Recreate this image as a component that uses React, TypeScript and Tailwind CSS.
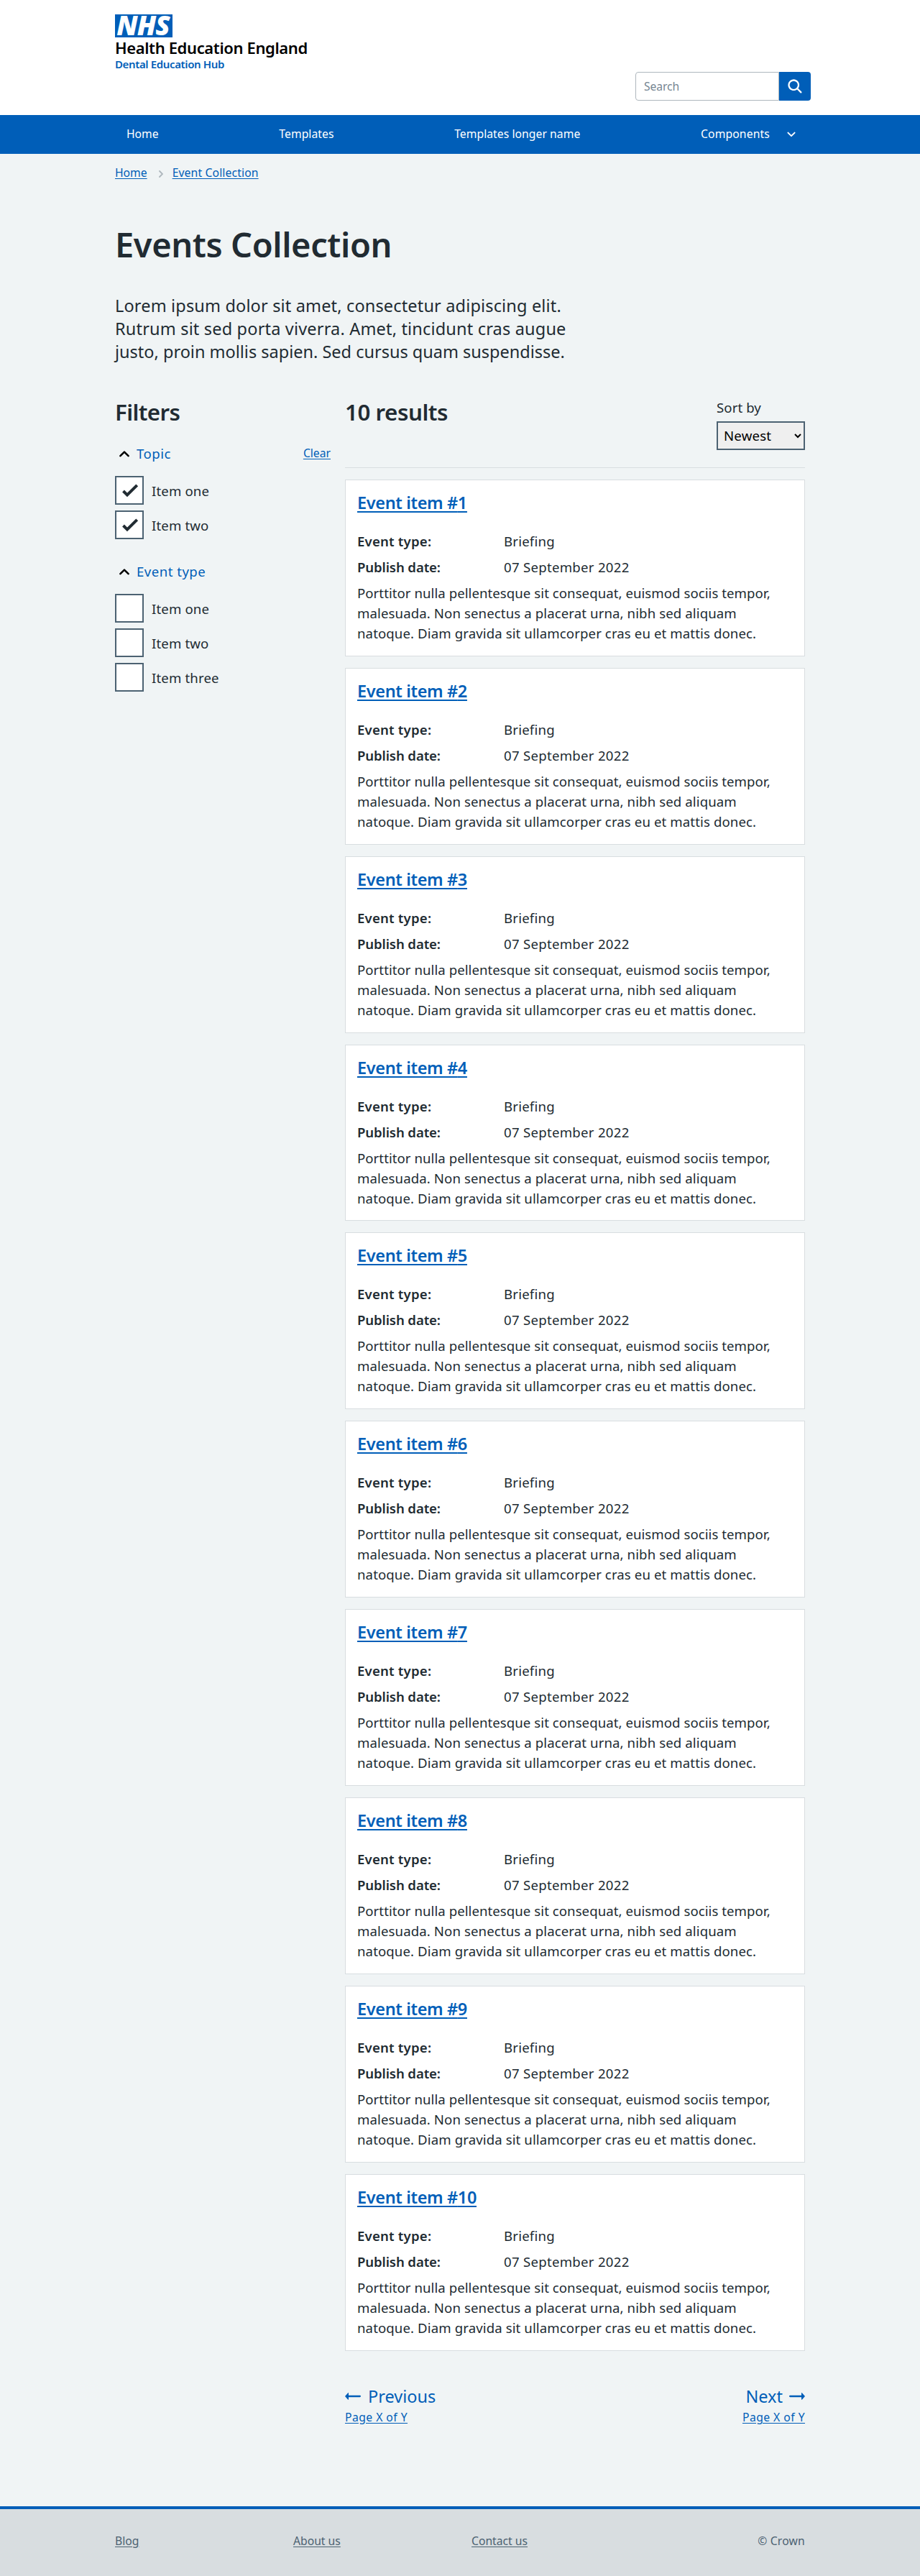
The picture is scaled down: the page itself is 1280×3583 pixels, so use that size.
const link = "text-[#005eb8] underline underline-offset-[2px] decoration-1";

function ChevronUp() {
  return (
    <svg className="ml-[6px] h-[10px] w-[14px]" viewBox="0 0 14 10" fill="none">
      <path d="M1.4 8.2 7 2.6l5.6 5.6" stroke="#000" strokeWidth="2.5" strokeLinecap="round" strokeLinejoin="round" />
    </svg>
  );
}

function Arrow({ flip = false }: { flip?: boolean }) {
  return (
    <svg className={flip ? "h-[10px] w-[22px] rotate-180" : "h-[10px] w-[22px]"} viewBox="0 0 22 10">
      <path d="M0 5 4 .4Q5-.4 5 .9V3.8H20.8Q22 3.9 22 5T20.8 6.2H5V9.1Q5 10.4 4 9.6Z" fill="#005eb8" />
    </svg>
  );
}

function Header() {
  return (
    <header className="bg-white">
      <div className="mx-auto flex h-[160px] w-[960px] justify-between pt-5">
        <div>
          <div className="flex h-8 w-20 items-center justify-center bg-[#005eb8]">
            <span className="pr-[2px] pb-[2px] text-[37.2px] leading-8 font-black italic tracking-[-1px] text-white">
              NHS
            </span>
          </div>
          <div className="mt-[2px] text-[22px] leading-[25px] font-semibold tracking-[-0.37px] text-black">
            Health Education England
          </div>
          <div className="text-[15px] leading-5 font-semibold tracking-[-0.37px] text-[#005eb8]">
            Dental Education Hub
          </div>
        </div>
        <form className="-mr-2 mt-20 flex h-10">
          <input
            placeholder="Search"
            className="h-10 w-[200px] rounded-l-[4px] border border-[#aeb7bd] bg-white px-[11px] text-[15.7px] tracking-[-0.1px] placeholder:text-[#768692]"
          />
          <button type="button" className="flex w-11 items-center justify-center rounded-r-[4px] bg-[#005eb8]">
            <svg className="h-[27px] w-[27px]" viewBox="0 0 24 24" fill="#fff">
              <path d="M19.71 18.29l-4.11-4.1a7 7 0 1 0-1.41 1.41l4.1 4.11a1 1 0 0 0 1.42 0 1 1 0 0 0 0-1.42zM5 10a5 5 0 1 1 5 5 5 5 0 0 1-5-5z" />
            </svg>
          </button>
        </form>
      </div>
      <nav className="bg-[#005eb8]">
        <div className="mx-auto flex h-[54px] w-[960px] items-center justify-between px-4 text-[15.7px] text-white">
          <a>Home</a>
          <a className="tracking-[0.06px]">Templates</a>
          <a className="tracking-[0.05px]">Templates longer name</a>
          <a className="flex items-center tracking-[0.14px]">
            Components
            <svg className="mr-[-3px] ml-[24px] h-[8px] w-[12px]" viewBox="0 0 12 8" fill="none">
              <path d="M1.4 1.6 6 6.2l4.6-4.6" stroke="#fff" strokeWidth="1.9" strokeLinecap="round" strokeLinejoin="round" />
            </svg>
          </a>
        </div>
      </nav>
    </header>
  );
}

function FilterGroup({ title, items, checked }: { title: string; items: string[]; checked: boolean }) {
  return (
    <section>
      <div className="flex items-center justify-between">
        <h3 className="flex items-center gap-[10px] text-[18.6px] leading-7 tracking-[0.48px] text-[#005eb8]">
          <ChevronUp />
          {title}
        </h3>
        {checked && <a className={`mb-[2px] text-[15.7px] leading-6 ${link}`}>Clear</a>}
      </div>
      <div className="mt-[17px] flex flex-col gap-2">
        {items.map((item) => (
          <label key={item} className="flex h-10 items-center">
            <span className="h-10 w-10 border-2 border-[#4c6272] bg-white">
              {checked && (
                <svg className="h-9 w-9" viewBox="2 2 36 36" fill="none">
                  <path d="M11.5 21l5.5 5.5L30.7 12.8" stroke="#212b32" strokeWidth="4" />
                </svg>
              )}
            </span>
            <span className="ml-[11px] pt-px text-[18.6px] leading-7 tracking-[0.15px]">{item}</span>
          </label>
        ))}
      </div>
    </section>
  );
}

function EventCard({ n }: { n: number }) {
  return (
    <article className="h-[245.88px] border border-[#d8dde0] bg-white px-4 pt-[15px]">
      <h3 className="text-[23.5px] leading-8 font-semibold tracking-[-0.36px]">
        <a className="text-[#005eb8] underline decoration-2 underline-offset-[3px]">Event item #{n}</a>
      </h3>
      <dl className="mt-6 grid grid-cols-[204px_1fr] gap-y-2 text-[18.6px] leading-7">
        <dt className="font-semibold tracking-[0.2px]">Event type:</dt>
        <dd className="tracking-[0.2px]">Briefing</dd>
        <dt className="font-semibold tracking-[-0.12px]">Publish date:</dt>
        <dd className="tracking-[0.28px]">07 September 2022</dd>
      </dl>
      <p className="mt-2 text-[18.6px] leading-7 tracking-[0.11px]">
        <span className="tracking-[0.06px]">Porttitor nulla pellentesque sit consequat, euismod sociis tempor,</span>
        <br />
        malesuada. Non senectus a placerat urna, nibh sed aliquam
        <br />
        natoque. Diam gravida sit ullamcorper cras eu et mattis donec.
      </p>
    </article>
  );
}

export default function App() {
  const events = [1, 2, 3, 4, 5, 6, 7, 8, 9, 10];
  return (
    <div className="flex h-[3583px] flex-col bg-[#f0f4f5] font-['Noto_Sans',sans-serif] text-[#212b32]">
      <Header />
      <div className="mx-auto w-[960px] flex-1">
        <div className="mt-[14px] flex items-center text-[15.7px] leading-6">
          <a className={link}>Home</a>
          <svg className="mt-[3px] mr-[13px] ml-[16px] h-[10px] w-[6px]" viewBox="0 0 6 10" fill="none">
            <path d="M1 1l4 4-4 4" stroke="#aeb7bd" strokeWidth="1.8" strokeLinecap="round" />
          </svg>
          <a className={`tracking-[0.14px] ${link}`}>Event Collection</a>
        </div>
        <h1 className="mt-[60px] text-[47px] leading-[56px] font-semibold tracking-[-0.4px]">Events Collection</h1>
        <p className="mt-[41px] text-[23.5px] leading-8">
          <span className="tracking-[0.16px]">Lorem ipsum dolor sit amet, consectetur adipiscing elit.</span>
          <br />
          <span className="tracking-[0.18px]">Rutrum sit sed porta viverra. Amet, tincidunt cras augue</span>
          <br />
          justo, proin mollis sapien. Sed cursus quam suspendisse.
        </p>
        <div className="mt-12 grid grid-cols-[300px_640px] gap-x-5">
          <aside>
            <h2 className="text-[31.3px] leading-10 font-semibold tracking-[-0.6px]">Filters</h2>
            <div className="mt-6 flex flex-col gap-[31px]">
              <FilterGroup title="Topic" items={["Item one", "Item two"]} checked />
              <FilterGroup title="Event type" items={["Item one", "Item two", "Item three"]} checked={false} />
            </div>
          </aside>
          <main>
            <div className="flex h-[98px] justify-between border-b border-[#d8dde0]">
              <h2 className="text-[31.3px] leading-10 font-semibold tracking-[-0.46px]">10 results</h2>
              <label className="block w-[123px] text-[18.6px] leading-7 tracking-[0.1px]">
                Sort by
                <select className="mt-[5px] block h-10 w-[123px] rounded-none border-2 border-[#4c6272] bg-[#efefef] px-1 pb-[2px] tracking-[0.2px] text-black">
                  <option>Newest</option>
                </select>
              </label>
            </div>
            <div className="mt-[15.9px] flex flex-col gap-4">
              {events.map((n) => (
                <EventCard key={n} n={n} />
              ))}
            </div>
            <nav className="mt-[47.3px] flex justify-between text-[23.5px] leading-8 text-[#005eb8]">
              <a>
                <span className="flex items-center gap-[10px]">
                  <Arrow />
                  Previous
                </span>
                <span className="mt-px block text-[15.7px] leading-6 tracking-[0.46px] underline underline-offset-[2px]">
                  Page X of Y
                </span>
              </a>
              <a>
                <span className="flex items-center justify-end gap-[9px]">
                  Next
                  <Arrow flip />
                </span>
                <span className="mt-px block text-[15.7px] leading-6 tracking-[0.46px] underline underline-offset-[2px]">
                  Page X of Y
                </span>
              </a>
            </nav>
          </main>
        </div>
      </div>
      <footer className="h-[97px] border-t-4 border-[#005eb8] bg-[#d8dde0]">
        <div className="mx-auto grid w-[960px] grid-cols-[248px_248px_1fr_auto] pt-8 text-[15.7px] leading-6 text-[#4c6272]">
          <a className="underline underline-offset-[2px]">Blog</a>
          <a className="underline underline-offset-[2px]">About us</a>
          <a className="underline underline-offset-[2px]">Contact us</a>
          <span className="tracking-[0.2px]">© Crown</span>
        </div>
      </footer>
    </div>
  );
}
